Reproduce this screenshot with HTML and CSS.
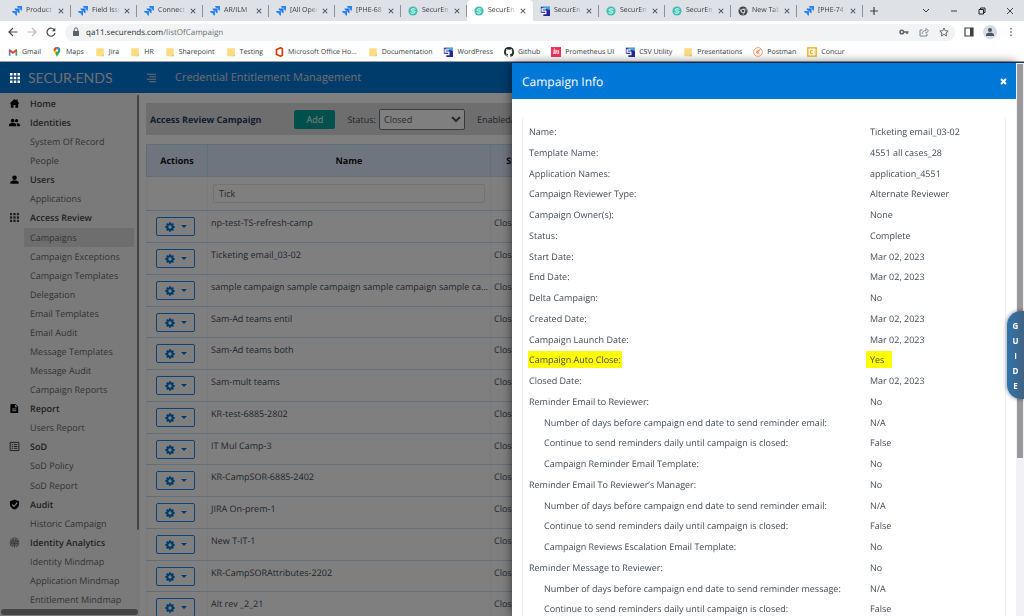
FILE: index.html
```html
<!DOCTYPE html>
<html lang="en">

<head>
  <meta charset="UTF-8">
  <meta name="viewport" content="width=device-width, initial-scale=1.0">
  <title>SecurEnds - Campaigns</title>
  <link rel="stylesheet" href="styles.css">
</head>

<body>

  <!-- Shared icons -->
  <svg class="sprite" aria-hidden="true">
    <symbol id="i-jira" viewBox="0 0 12 12">
      <path d="M6 0h6v5.6A2.6 2.6 0 0 1 9.400 3.100V2.600H8.600A2.600 2.600 0 0 1 6 0z" fill="#2684ff"/>
      <path d="M3 3h6v5.600A2.600 2.600 0 0 1 6.400 6.100V5.600H5.600A2.600 2.600 0 0 1 3 3z" fill="#1b74f0"/>
      <path d="M0 6h6v5.600A2.600 2.600 0 0 1 3.400 9.100V8.600H2.600A2.600 2.600 0 0 1 0 6z" fill="#2684ff"/>
    </symbol>
    <symbol id="i-secur" viewBox="0 0 12 12">
      <circle cx="6" cy="6" r="5.500" fill="#3dbfb0"/>
      <path d="M9 4.200C8 2.600 4 2.600 3.400 5.200L7.800 4.800M3 7.800C4 9.400 8 9.400 8.600 6.800L4.200 7.200" fill="none" stroke="#e8fffb"/>
    </symbol>
    <symbol id="i-s" viewBox="0 0 12 12">
      <path d="M1 1h11v11H4V8H1z" fill="#26269b"/>
      <path d="M1 1h11v4z" fill="#3fa9dc"/>
      <path d="M7 3.500H2.500V6H7v3H1.500" fill="none" stroke="#fff" stroke-width="1.500"/>
    </symbol>
    <symbol id="i-chrome" viewBox="0 0 12 12">
      <circle cx="6" cy="6" r="5.500" fill="#45484c"/>
      <circle cx="6" cy="6" r="2.200" fill="#45484c" stroke="#fff"/>
      <path d="M6 3.800h5M4 7L1.700 3M8 7.200L5.800 11" stroke="#dee1e6" stroke-width=".8"/>
    </symbol>
    <symbol id="i-folder" viewBox="0 0 12 12">
      <path d="M1.500 1.500h9v8l-1.500 1.500h-7.500z" fill="#fbdc83"/>
      <path d="M10.500 8.500L8 11h2.500z" fill="#eabf51"/>
    </symbol>
    <symbol id="i-x" viewBox="0 0 8 8">
      <path d="M1 1l6 6M7 1L1 7" stroke="currentColor" stroke-width="1.400"/>
    </symbol>
    <symbol id="i-grid" viewBox="0 0 12 12">
      <path d="M0 0h3v3H0zM4.500 0h3v3h-3zM9 0h3v3H9zM0 4.500h3v3H0zM4.500 4.500h3v3h-3zM9 4.500h3v3H9zM0 9h3v3H0zM4.500 9h3v3h-3zM9 9h3v3H9z" fill="currentColor"/>
    </symbol>
    <symbol id="i-gear" viewBox="0 0 12 12">
      <circle cx="6" cy="6" r="3.200" fill="none" stroke="currentColor" stroke-width="2.400"/>
      <path d="M6 .4v2M6 9.600v2M.4 6h2M9.600 6h2M2 2l1.500 1.500M8.500 8.500L10 10M10 2L8.500 3.500M3.500 8.500L2 10" stroke="currentColor" stroke-width="2.200"/>
    </symbol>
  </svg>

  <header class="browser">
    <div class="tabs" id="tabs">
      <button class="new-tab" aria-label="New tab"><svg viewBox="0 0 8 8"><path d="M4 0v8M0 4h8" stroke="#3c4043" stroke-width="1.200"/></svg></button>
      <div class="window-controls">
        <button aria-label="Search tabs"><svg viewBox="0 0 8 8"><path d="M1 2l3 3 3-3" fill="none" stroke="#3c4043"/></svg></button>
        <button aria-label="Minimize"><svg viewBox="0 0 8 8"><path d="M1 4h6" stroke="#3c4043"/></svg></button>
        <button aria-label="Restore"><svg viewBox="0 0 8 8"><path d="M1 2.500h4.500V7H1zM2.500 2.500V1H7v4.500H5.500" fill="none" stroke="#222"/></svg></button>
        <button aria-label="Close"><svg viewBox="0 0 8 8"><path d="M1 1l6 6M7 1L1 7" stroke="#333" stroke-width=".9"/></svg></button>
      </div>
    </div>

    <div class="toolbar">
      <button aria-label="Back"><svg viewBox="0 0 10 10"><path d="M9.500 5H1.200M5 1L1 5l4 4" fill="none" stroke="#45484c" stroke-width="1.200"/></svg></button>
      <button aria-label="Forward"><svg viewBox="0 0 10 10"><path d="M.5 5h8.300M5 1l4 4-4 4" fill="none" stroke="#b9bbbe" stroke-width="1.200"/></svg></button>
      <button aria-label="Reload"><svg viewBox="0 0 10 10"><path d="M8.500 3.200A4 4 0 1 0 9 5.800" fill="none" stroke="#45484c" stroke-width="1.200"/><path d="M9.300.8v3.400H5.900z" fill="#45484c"/></svg></button>
      <div class="address">
        <svg viewBox="0 0 10 10"><path d="M2 4h6v5H2z" fill="#5f6368"/><path d="M3.300 4V2.600a1.700 1.700 0 0 1 3.400 0V4" fill="none" stroke="#5f6368"/></svg>
        <span class="url">qa11.securends.com<span>/listOfCampaign</span></span>
        <button aria-label="Passwords"><svg viewBox="0 0 10 10"><circle cx="2.800" cy="5" r="1.800" fill="none" stroke="#5f6368" stroke-width="1.500"/><path d="M4.500 5H9.500M8 5v2" stroke="#5f6368" stroke-width="1.600"/></svg></button>
        <button aria-label="Share"><svg viewBox="0 0 10 10"><path d="M3.500 3H1v6h7V7M3 7c.3-2.500 2-3.500 4-3.500V1.500L9.500 4 7 6.300V4.800" fill="none" stroke="#777b80" stroke-width=".9"/></svg></button>
        <button aria-label="Bookmark"><svg viewBox="0 0 10 10"><path d="M5 1l1.200 2.700 3 .3-2.300 2 .7 3L5 7.400 2.400 9l.7-3L.8 4l3-.3z" fill="none" stroke="#5f6368" stroke-width=".9"/></svg></button>
      </div>
      <button aria-label="Side panel"><svg viewBox="0 0 10 10"><path d="M1 1h8v8H1z" fill="none" stroke="#3c4043" stroke-width="1.200"/><path d="M6 1h3v8H6z" fill="#3c4043"/></svg></button>
      <button class="profile" aria-label="Profile"><svg viewBox="0 0 10 10"><circle cx="5" cy="3" r="2" fill="#4c5563"/><path d="M1 9V7.500c0-2.500 8-2.500 8 0V9z" fill="#4c5563"/></svg></button>
      <button aria-label="Menu"><svg viewBox="0 0 10 10"><path d="M4.300 1h1.400v1.400H4.300zM4.300 4.300h1.400v1.400H4.300zM4.300 7.600h1.400V9H4.300z" fill="#5f6368"/></svg></button>
    </div>

    <nav class="bookmarks">
      <a href="#"><svg viewBox="0 0 12 12"><path d="M2 10.500V3" stroke="#4285f4" stroke-width="2"/><path d="M10 10.500V3" stroke="#34a853" stroke-width="2"/><path d="M1.500 3.500L6 7l4.500-3.500" fill="none" stroke="#ea4335" stroke-width="2.200"/></svg>Gmail</a>
      <a href="#"><svg viewBox="0 0 12 12"><path d="M6 12C5.500 9 2 7.500 2 4.200A4 4 0 0 1 6 0z" fill="#fbbc04"/><path d="M2 4.500A4 4 0 0 1 6 0l-.5 4z" fill="#ea4335"/><path d="M6 0a4 4 0 0 1 4 4.200C10 7.500 6.500 9 6 12L4.500 8.500z" fill="#34a853"/><path d="M5 .1a4 4 0 0 1 4.500 2L7 5z" fill="#4285f4"/><circle cx="6" cy="4.200" r="1.500" fill="#fff"/></svg>Maps</a>
      <a href="#"><svg><use href="#i-folder"/></svg>Jira</a>
      <a href="#"><svg><use href="#i-folder"/></svg>HR</a>
      <a href="#"><svg><use href="#i-folder"/></svg>Sharepoint</a>
      <a href="#"><svg><use href="#i-folder"/></svg>Testing</a>
      <a href="#"><svg viewBox="0 0 12 12"><path d="M8 1L3 3v6l5 2 2-1V2z" fill="none" stroke="#d83b01" stroke-width="2"/></svg>Microsoft Office Ho...</a>
      <a href="#"><svg><use href="#i-folder"/></svg>Documentation</a>
      <a href="#"><svg><use href="#i-s"/></svg>WordPress</a>
      <a href="#"><svg viewBox="0 0 16 16"><path d="M8 0a8 8 0 0 0-2.500 15.600c.4.100.5-.2.500-.4v-1.500c-2 .5-2.600-.8-2.800-1.400-.5-.8-1-1-.4-1.100.8-.1 1.200.8 1.400 1.100.6 1 1.500.8 1.900.5.100-.5.300-.9.500-1.100-1.800-.2-3.700-.9-3.700-4 0-.9.300-1.600.9-2.200-.1-.2-.4-1 .1-2.100 0 0 .7-.2 2.200.8a7.600 7.600 0 0 1 4 0c1.500-1 2.200-.8 2.200-.8.400 1.100.100 1.900.1 2.100.5.600.8 1.300.8 2.200 0 3.100-1.900 3.800-3.700 4 .3.200.6.700.6 1.500v2c0 .2.100.5.500.4A8 8 0 0 0 8 0z" fill="#24292f"/></svg>Github</a>
      <a href="#"><span class="in-logo">in</span>Prometheus UI</a>
      <a href="#"><svg><use href="#i-s"/></svg>CSV Utility</a>
      <a href="#"><svg><use href="#i-folder"/></svg>Presentations</a>
      <a href="#"><svg viewBox="0 0 12 12"><circle cx="6" cy="6" r="5.300" fill="#fff" stroke="#ff8a65"/><path d="M9 3L4 6l3 3M4 6h3" fill="none" stroke="#ff6c37" stroke-width="1.200"/></svg>Postman</a>
      <a href="#"><svg viewBox="0 0 12 12"><path d="M1 1h10v10H1z" fill="#fff" stroke="#f0ab00" stroke-width="1.500"/><path d="M7 4.300a2 2 0 1 0 0 3.400M8.500 6h1" fill="none" stroke="#f0ab00" stroke-width="1.400"/></svg>Concur</a>
    </nav>
  </header>

  <div class="app">
    <header class="app-header">
      <div class="brand">
        <svg><use href="#i-grid"/></svg>
        <span>SECUR·ENDS</span>
      </div>
      <button class="menu" aria-label="Toggle menu"><svg viewBox="0 0 12 12"><path d="M1 1.500h11M4 4.500h8M1 7.500h11M4 10.500h8" stroke="currentColor" stroke-width="1.200"/></svg></button>
      <h1>Credential Entitlement Management</h1>
    </header>

    <div class="app-body">
      <nav class="sidebar">
        <ul>
          <li><a class="main" href="#"><svg viewBox="0 0 24 24"><path d="M12 2L1 12h3v9h6v-6h4v6h6v-9h3l-4-3.600V3h-3v2.700z"/></svg>Home</a></li>
          <li><a class="main" href="#"><svg viewBox="0 0 24 24"><circle cx="8" cy="8" r="4"/><circle cx="16.500" cy="8" r="3.500"/><path d="M0 20v-3c0-5 16-5 16 0v3zM18 20v-3c0-1.500-.6-2.600-1.600-3.500C20 13.300 24 14.500 24 17v3z"/></svg>Identities</a></li>
          <li><a href="#">System Of Record</a></li>
          <li><a href="#">People</a></li>
          <li><a class="main" href="#"><svg viewBox="0 0 24 24"><circle cx="12" cy="8" r="5"/><path d="M3 21v-3c0-5 18-5 18 0v3z"/></svg>Users</a></li>
          <li><a href="#">Applications</a></li>
          <li><a class="main" href="#"><svg viewBox="-1 -1 14 14"><use href="#i-grid" width="12" height="12"/></svg>Access Review</a></li>
          <li><a class="current" href="#">Campaigns</a></li>
          <li><a href="#">Campaign Exceptions</a></li>
          <li><a href="#">Campaign Templates</a></li>
          <li><a href="#">Delegation</a></li>
          <li><a href="#">Email Templates</a></li>
          <li><a href="#">Email Audit</a></li>
          <li><a href="#">Message Templates</a></li>
          <li><a href="#">Message Audit</a></li>
          <li><a href="#">Campaign Reports</a></li>
          <li><a class="main" href="#"><svg viewBox="0 0 24 24"><path fill-rule="evenodd" d="M5 2h9l6 6v14H5a2 2 0 0 1-2-2V4a2 2 0 0 1 2-2zM7 12v2h9v-2zM7 16v2h9v-2zM13 3.500V9h5.500z"/></svg>Report</a></li>
          <li><a href="#">Users Report</a></li>
          <li><a class="main" href="#"><svg viewBox="0 0 24 24"><path d="M2.500 3h19v18h-19zM6 8h3M6 12h3M6 16h3M11 8h7M11 12h7M11 16h7" fill="none" stroke="#333" stroke-width="2"/></svg>SoD</a></li>
          <li><a href="#">SoD Policy</a></li>
          <li><a href="#">SoD Report</a></li>
          <li><a class="main" href="#"><svg viewBox="0 0 24 24"><path d="M12 1L2 5v6c0 6 4 10.500 10 12 6-1.500 10-6 10-12V5z"/><path d="M7 12l4 4 7-8" fill="none" stroke="#fff" stroke-width="2.500"/></svg>Audit</a></li>
          <li><a href="#">Historic Campaign</a></li>
          <li><a class="main" href="#"><svg viewBox="0 0 24 24" fill="none" stroke="#777" stroke-width="2"><path d="M5 20C1 14 2 2 12 2s11 12 7 18M8 22C4 14 5 6 12 6s8 8 4 16M12 23V10M9 4v16M15 4v16M4 9h16M4 14h16"/></svg>Identity Analytics</a></li>
          <li><a href="#">Identity Mindmap</a></li>
          <li><a href="#">Application Mindmap</a></li>
          <li><a href="#">Entitlement Mindmap</a></li>
        </ul>
        <div class="scroll-x"></div>
        <div class="scroll-y"></div>
      </nav>

      <main>
        <div class="filters">
          <h2>Access Review Campaign</h2>
          <button class="add">Add</button>
          <label for="status">Status:</label>
          <select id="status"><option>Closed</option><option>Open</option></select>
          <span class="more">Enabled/</span>
        </div>

        <table class="campaigns">
          <thead>
            <tr><th class="col-actions">Actions</th><th class="col-name">Name</th><th class="col-status">Status</th><th></th></tr>
            <tr class="search"><td></td><td><input type="text" value="Tick" aria-label="Filter by name"></td><td></td><td></td></tr>
          </thead>
          <tbody id="rows"></tbody>
        </table>
      </main>
    </div>

    <div class="overlay"></div>
  </div>

  <section class="drawer" aria-label="Campaign Info">
    <header>
      <h2>Campaign Info</h2>
      <button aria-label="Close"><svg viewBox="0 0 8 8"><path d="M1.200 1.200l5.600 5.600M6.800 1.200L1.200 6.800" stroke="#fff" stroke-width="2.200"/></svg></button>
    </header>
    <dl id="info"></dl>
  </section>

  <div class="page-scroll"></div>
  <button class="guide">G<br>U<br>I<br>D<br>E</button>

  <script>
    const tabs = [
      ['jira', 'Product'], ['jira', 'Field Issu'], ['jira', 'Connect'], ['jira', 'AR/ILM'],
      ['jira', '[All Oper'], ['jira', '[PHE-68'], ['secur', 'SecurEn'], ['secur', 'SecurEn'],
      ['s', 'SecurEn'], ['secur', 'SecurEn'], ['secur', 'SecurEn'], ['chrome', 'New Tab'], ['jira', '[PHE-74']
    ];
    const activeTab = 7;

    const campaigns = [
      'np-test-TS-refresh-camp', 'Ticketing email_03-02',
      'sample campaign sample campaign sample campaign sample campaign',
      'Sam-Ad teams entil', 'Sam-Ad teams both', 'Sam-mult teams', 'KR-test-6885-2802', 'IT Mul Camp-3',
      'KR-CampSOR-6885-2402', 'JIRA On-prem-1', 'New T-IT-1', 'KR-CampSORAttributes-2202', 'Alt rev _2_21'
    ];

    // label, value, extra class
    const info = [
      ['Name:', 'Ticketing email_03-02'],
      ['Template Name:', '4551 all cases_28'],
      ['Application Names:', 'application_4551'],
      ['Campaign Reviewer Type:', 'Alternate Reviewer'],
      ['Campaign Owner(s):', 'None'],
      ['Status:', 'Complete'],
      ['Start Date:', 'Mar 02, 2023'],
      ['End Date:', 'Mar 02, 2023'],
      ['Delta Campaign:', 'No'],
      ['Created Date:', 'Mar 02, 2023'],
      ['Campaign Launch Date:', 'Mar 02, 2023'],
      ['Campaign Auto Close:', 'Yes', 'marked'],
      ['Closed Date:', 'Mar 02, 2023'],
      ['Reminder Email to Reviewer:', 'No'],
      ['Number of days before campaign end date to send reminder email:', 'N/A', 'sub'],
      ['Continue to send reminders daily until campaign is closed:', 'False', 'sub'],
      ['Campaign Reminder Email Template:', 'No', 'sub'],
      ['Reminder Email To Reviewer’s Manager:', 'No'],
      ['Number of days before campaign end date to send reminder email:', 'N/A', 'sub'],
      ['Continue to send reminders daily until campaign is closed:', 'False', 'sub'],
      ['Campaign Reviews Escalation Email Template:', 'No', 'sub'],
      ['Reminder Message to Reviewer:', 'No'],
      ['Number of days before campaign end date to send reminder message:', 'N/A', 'sub'],
      ['Continue to send reminders daily until campaign is closed:', 'False', 'sub']
    ];

    document.getElementById('tabs').insertAdjacentHTML('afterbegin', tabs.map(([icon, title], i) => `
      <div class="tab${i === activeTab ? ' active' : ''}">
        <svg class="favicon"><use href="#i-${icon}"/></svg>
        <span>${title}</span>
        <button aria-label="Close tab"><svg><use href="#i-x"/></svg></button>
      </div>`).join(''));

    document.getElementById('rows').innerHTML = campaigns.map(name => `
      <tr>
        <td><button class="action" aria-label="Actions"><svg><use href="#i-gear"/></svg><i></i></button></td>
        <td>${name}</td>
        <td>Closed</td>
        <td></td>
      </tr>`).join('');

    document.getElementById('info').innerHTML = info.map(([label, value, cls]) => `
      <div class="${cls || ''}"><dt><span>${label}</span></dt><dd><span>${value}</span></dd></div>`).join('');
  </script>
</body>

</html>
```
FILE: styles.css
```css
* {
  box-sizing: border-box;
}

body {
  margin: 0;
  height: 100vh;
  display: flex;
  flex-direction: column;
  overflow: hidden;
  font-family: "Open Sans", "Noto Sans", sans-serif;
  font-size: 9px;
  color: #444c58;
  text-rendering: geometricPrecision;
}

button {
  padding: 0;
  border: 0;
  background: none;
  font: inherit;
  color: inherit;
  cursor: pointer;
}

a {
  color: inherit;
  text-decoration: none;
}

h1, h2, ul, dl, dd {
  margin: 0;
  padding: 0;
}

svg {
  display: block;
  flex: none;
}

.sprite {
  position: absolute;
  width: 0;
  height: 0;
}

/* Browser frame */
.browser {
  flex: none;
  border-bottom: 1px solid #9aa0a6;
  background: #fff;
  font-size: 7px;
}

.tabs {
  display: flex;
  align-items: center;
  height: 21px;
  padding-left: 5px;
  background: #dee1e6;
}

.tab {
  display: flex;
  align-items: center;
  gap: 4px;
  flex: 0 1 66px;
  min-width: 0;
  height: 21px;
  padding: 0 7px;
  background: linear-gradient(#8b9096, #8b9096) right / 1px 12px no-repeat;
}

.tab.active {
  border-radius: 4px 4px 0 0;
  background: #fff;
}

.tab span {
  flex: 1;
  min-width: 0;
  overflow: hidden;
  white-space: nowrap;
  color: #35383c;
  -webkit-mask-image: linear-gradient(90deg, #000 70%, transparent);
  mask-image: linear-gradient(90deg, #000 70%, transparent);
}

.favicon {
  width: 10px;
  height: 10px;
}

.tab button svg {
  width: 6px;
  height: 6px;
}

.new-tab {
  margin-left: 7px;
}

.new-tab svg,
.window-controls svg {
  width: 8px;
  height: 8px;
}

.window-controls {
  display: flex;
  gap: 20px;
  margin-left: auto;
  padding-right: 10px;
}

.toolbar {
  display: flex;
  align-items: center;
  gap: 9px;
  height: 22px;
  padding: 0 8px;
}

.toolbar svg {
  width: 10px;
  height: 10px;
}

.address {
  flex: 1;
  display: flex;
  align-items: center;
  gap: 10px;
  height: 17px;
  padding: 0 6px;
  border-radius: 8px;
  background: #f1f3f4;
}

.address > svg {
  margin-right: -5px;
}

.url {
  flex: 1;
  font-size: 8px;
  color: #2b2d30;
}

.url span {
  color: #6b6f74;
}

.profile {
  padding: 2px;
  border-radius: 50%;
  background: #d5dbe6;
}

.bookmarks {
  display: flex;
  align-items: center;
  gap: 11px;
  height: 18px;
  padding-left: 8px;
  color: #35383c;
  white-space: nowrap;
}

.bookmarks a {
  display: flex;
  align-items: center;
  gap: 4px;
}

.bookmarks svg,
.in-logo {
  width: 10px;
  height: 10px;
}

.in-logo {
  background: #f52f60;
  color: #fff;
  font: italic bold 8px/9px "Liberation Serif", serif;
  text-align: center;
}

/* Application */
.app {
  position: relative;
  flex: 1;
  min-height: 0;
  display: flex;
  flex-direction: column;
  overflow: hidden;
}

.app-header {
  flex: none;
  display: flex;
  align-items: center;
  height: 31px;
  background: #0078d7;
  color: #ddd;
}

.brand {
  display: flex;
  align-items: center;
  gap: 8px;
  width: 146px;
  padding-left: 10px;
  font: 14px Lato, sans-serif;
}

.brand svg,
.menu svg {
  width: 10px;
  height: 10px;
}

/* the launcher stays lit above the overlay */
.brand svg {
  position: relative;
  z-index: 1;
  color: #fff;
}

.app-header h1 {
  margin-left: 19px;
  font-size: 11px;
  font-weight: 400;
}

.app-body {
  flex: 1;
  min-height: 0;
  display: flex;
  align-items: stretch;
}

.sidebar {
  position: relative;
  flex: none;
  width: 140px;
  padding: 1px 0 7px;
  background: #f5f5f5;
}

.sidebar ul {
  height: 100%;
  display: grid;
  grid-auto-rows: 1fr;
  list-style: none;
}

.sidebar a {
  height: 100%;
  display: flex;
  align-items: center;
  margin: 0 6px 0 24px;
  padding-left: 6px;
  color: #666;
}

.sidebar a.main {
  margin-left: 0;
  padding-left: 9px;
  gap: 10px;
  font-weight: 600;
  color: #444;
}

.sidebar a.current {
  background: #ddd;
}

.sidebar svg {
  width: 11px;
  height: 11px;
}

.scroll-x,
.scroll-y {
  position: absolute;
  left: 1px;
  bottom: 1px;
  width: 137px;
  height: 6px;
  border-radius: 3px;
  background: #888;
}

.scroll-y {
  left: auto;
  right: 1px;
  top: 2px;
  bottom: 86px;
  width: 2px;
  height: auto;
}

main {
  flex: 1;
  min-width: 0;
  overflow: hidden;
  padding: 10px 0 0 6px;
}

.filters {
  display: flex;
  align-items: center;
  height: 32px;
  padding-left: 4px;
  background: #ddd;
  white-space: nowrap;
}

.filters h2 {
  font-size: 9px;
  color: #1b3d63;
}

.filters label,
.filters .more {
  margin-left: 12px;
}

.add {
  width: 41px;
  height: 19px;
  margin-left: 33px;
  border-radius: 2px;
  background: #00a39b;
  color: #fff;
}

.filters select {
  width: 86px;
  height: 21px;
  margin-left: 3px;
  border: 1px solid #777;
  border-radius: 2px;
  background: #fff;
  color: #555;
  font: inherit;
}

.campaigns {
  width: 100%;
  margin-top: 9px;
  border-collapse: collapse;
  table-layout: fixed;
}

.campaigns th {
  height: 32px;
  border: 1px solid #c3def5;
  background: #dfebff;
  color: #111;
  font-size: 9px;
}

.campaigns td {
  height: 32px;
  padding: 5px 0 5px 3px;
  border: 1px solid #f4f4f4;
  border-bottom-color: #c3def5;
  vertical-align: top;
  overflow: hidden;
  text-overflow: ellipsis;
  white-space: nowrap;
  line-height: 14px;
}

/* keeps the list a little tighter than a full 32px rhythm */
.campaigns tbody tr:nth-child(4n) td {
  height: 31px;
}

.campaigns .col-actions {
  width: 61px;
}

.campaigns .col-name {
  width: 283px;
}

.campaigns .col-status {
  width: 60px;
}

.campaigns .search td {
  height: 34px;
  padding: 7px 5px;
}

.campaigns input {
  width: 100%;
  height: 19px;
  padding: 0 5px;
  border: 1px solid #e6e6e6;
  border-radius: 2px;
  color: #555;
  font: inherit;
}

.action {
  display: flex;
  align-items: center;
  justify-content: center;
  gap: 6px;
  width: 39px;
  height: 19px;
  margin: 1px 0 0 6px;
  border: 1px solid #1e88e5;
  border-radius: 2px;
  color: #0078d7;
}

.action svg {
  width: 10px;
  height: 10px;
}

.action i {
  border: 3px solid transparent;
  border-top-color: currentColor;
  border-bottom: 0;
}

.overlay {
  position: absolute;
  inset: 0;
  background: rgba(0, 0, 0, .5);
}

/* Drawer over the right half */
.drawer {
  position: fixed;
  top: 63px;
  right: 8px;
  bottom: 0;
  width: 504px;
  padding: 0 10px;
  overflow: hidden;
  background: #fff;
  box-shadow: 0 0 10px rgba(0, 0, 0, .6);
}

.drawer header {
  display: flex;
  align-items: center;
  justify-content: space-between;
  height: 36px;
  margin: 0 -10px;
  padding: 0 9px 0 10px;
  background: #0078d7;
  color: #fff;
}

.drawer h2 {
  font-size: 12px;
  font-weight: 400;
}

.drawer header svg {
  width: 7px;
  height: 7px;
}

.drawer dl {
  margin-top: 18px;
  padding: 4px 6px;
  border: 1px solid #eee;
  border-top: 0;
  border-radius: 3px;
}

.drawer dl div {
  display: grid;
  grid-template-columns: 341px 1fr;
  line-height: 21px;
}

.drawer dl div:nth-child(4n) {
  line-height: 20px;
}

.drawer .sub dt {
  padding-left: 15px;
}

.marked span {
  margin: 0 -1px;
  padding: 2px 1px;
  background: #ff0;
}

.marked dd span {
  margin: 0 -4px;
  padding: 2px 8px 2px 4px;
}

.page-scroll {
  position: fixed;
  top: 63px;
  right: 0;
  bottom: 0;
  width: 8px;
  background: linear-gradient(#999, #999) 1px 1px / 6px 394px no-repeat #f1f1f6;
}

.guide {
  position: fixed;
  top: 311px;
  right: 0;
  width: 17px;
  height: 88px;
  border-radius: 14px 0 0 14px;
  background: linear-gradient(90deg, #2f74b0, #42627f);
  box-shadow: 0 0 4px rgba(0, 0, 0, .5);
  color: #fff;
  font-size: 8px;
  font-weight: 700;
  line-height: 15px;
}
```
